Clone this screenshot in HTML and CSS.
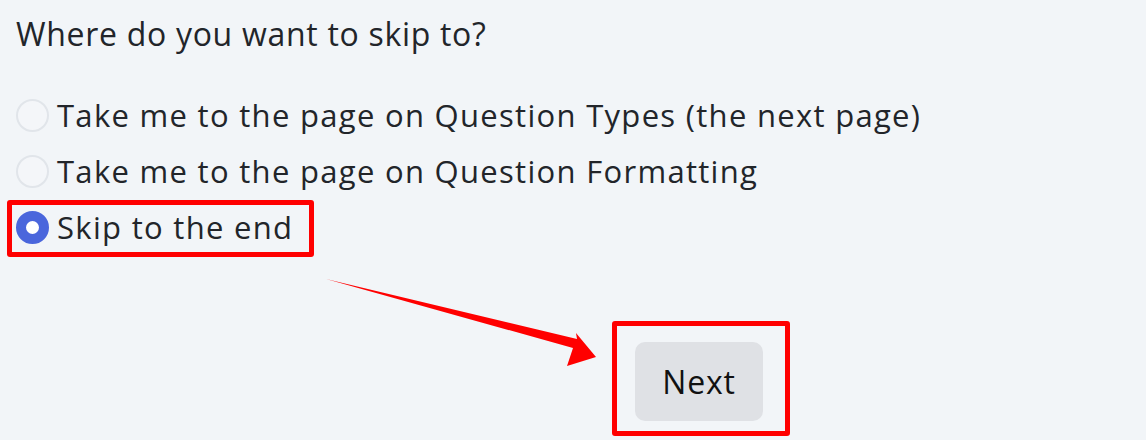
FILE: index.html
```html
<!DOCTYPE html>
<html>
<head>
<meta charset="utf-8">
<link rel="stylesheet" href="styles.css">
</head>
<body>
<div class="page">
  <div class="question">Where do you want to skip to?</div>
  <div class="options">
    <label class="option"><span class="radio"></span><span class="label">Take me to the page on Question Types (the next page)</span></label>
    <label class="option"><span class="radio"></span><span class="label">Take me to the page on Question Formatting</span></label>
    <label class="option"><span class="radio checked"></span><span class="label">Skip to the end</span></label>
  </div>
  <div class="actions">
    <button class="next">Next</button>
  </div>
  <div class="mark mark-option"></div>
  <div class="mark mark-button"></div>
  <svg class="arrow" width="1146" height="440" viewBox="0 0 1146 440">
    <polygon points="326,279 577,339 576,333 596,357 567,366 573,348" fill="#ff0000"/>
  </svg>
</div>
</body>
</html>
```

FILE: styles.css
```css
html, body {
  margin: 0;
  padding: 0;
  background: #f2f5f8;
}
.page {
  position: relative;
  width: 1146px;
  height: 440px;
  overflow: hidden;
  font-family: "Open Sans", "Liberation Sans", sans-serif;
  color: #22252a;
  padding: 14px 0 0 16px;
  box-sizing: border-box;
}
.question {
  font-size: 32px;
  line-height: 40px;
  letter-spacing: 0.7px;
}
.options {
  margin-top: 45px;
  display: flex;
  flex-direction: column;
  gap: 23px;
}
.option {
  display: flex;
  align-items: center;
  gap: 8px;
  height: 33px;
}
.radio {
  width: 33px;
  height: 33px;
  border-radius: 50%;
  box-sizing: border-box;
  border: 2px solid #e1e5ea;
  background: #f4f6f9;
  flex: none;
}
.radio.checked {
  border: 10px solid #4a66dc;
  background: #ffffff;
}
.label {
  font-size: 31px;
  line-height: 33px;
  letter-spacing: 1.3px;
  white-space: nowrap;
}
.actions {
  margin-top: 98px;
  padding-left: 619px;
}
.next {
  width: 128px;
  height: 79px;
  border: none;
  border-radius: 10px;
  background: #dfe1e5;
  font-family: inherit;
  font-size: 32px;
  letter-spacing: 0.8px;
  color: #111;
  padding: 0;
}
.mark {
  position: absolute;
  border: 5px solid #ff0000;
  border-radius: 3px;
  box-sizing: border-box;
}
.mark-option {
  left: 7px;
  top: 200px;
  width: 307px;
  height: 57px;
}
.mark-button {
  left: 612px;
  top: 321px;
  width: 178px;
  height: 115px;
}
.arrow {
  position: absolute;
  left: 0;
  top: 0;
}
```
